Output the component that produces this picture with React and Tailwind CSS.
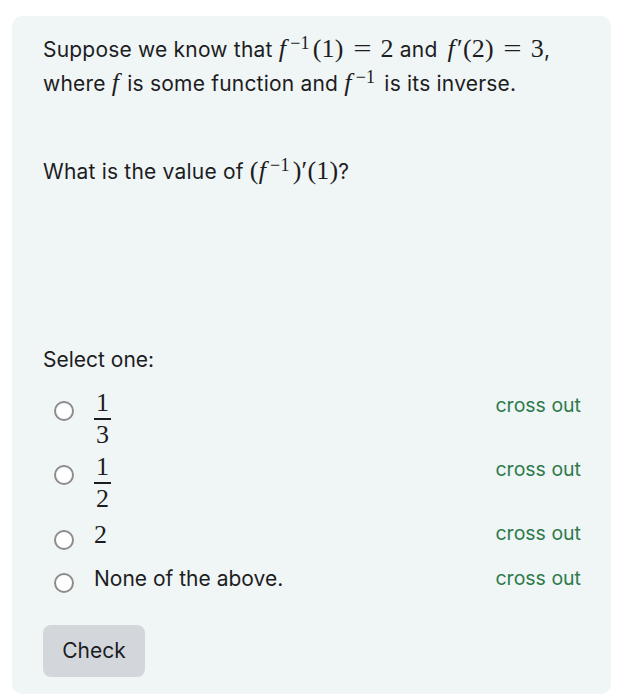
import React from "react";

const M = ({ children }) => (
  <span className="font-['Liberation_Serif','DejaVu_Serif',serif] text-[26px] leading-[0]">{children}</span>
);
const F = () => <span className="italic pr-[2px]">f</span>;
const Inv = () => (
  <sup className="text-[18px] relative -top-[8px] ml-[2px] mr-[3px]">−1</sup>
);
const Eq = () => <span className="inline-block scale-x-125 mx-[11px]">=</span>;

const Frac = ({ top, bottom }) => (
  <span className="inline-flex flex-col items-center font-['Liberation_Serif','DejaVu_Serif',serif] text-[26px] leading-[30px]">
    <span>{top}</span>
    <span className="w-[17px] h-[2px] bg-[#1d1d1f]"></span>
    <span>{bottom}</span>
  </span>
);

const Radio = ({ mt }) => (
  <span className={`block w-[20px] h-[20px] rounded-full border-2 border-[#8c8c8c] bg-white ml-[11px] shrink-0 ${mt}`}></span>
);

const options = [
  { key: "a", h: "h-[64px]", radio: "mt-[13px]", cross: "mt-[5px]", body: <Frac top="1" bottom="3" />, bodyMt: "mt-0" },
  { key: "b", h: "h-[64px]", radio: "mt-[13px]", cross: "mt-[5px]", body: <Frac top="1" bottom="2" />, bodyMt: "mt-0" },
  { key: "c", h: "h-[48px]", radio: "mt-[14px]", cross: "mt-[5px]", body: <span className="font-['Liberation_Serif','DejaVu_Serif',serif] text-[26px] leading-[30px]">2</span>, bodyMt: "mt-[4px]" },
  { key: "d", h: "h-[30px]", radio: "mt-[9px]", cross: "mt-[2px]", body: <span className="text-[21px] leading-[30px]">None of the above.</span>, bodyMt: "mt-0" },
];

export default function App() {
  return (
    <div className="min-h-[700px] bg-white pt-[16px] pl-[12px] font-['Inter','Noto_Sans',sans-serif] text-[#1d1d1f]">
      <div className="w-[599px] h-[678px] bg-[#f0f5f6] rounded-[10px] pt-[17px] pl-[31px] pr-[30px]">
        <p className="text-[21px] leading-[34px] tracking-[0.2px]">
          Suppose we know that <M><F /><Inv />(1)<Eq />2</M> and{" "}
          <M><span className="ml-[4px]"></span><F />′(2)<Eq />3</M>,
          <br />
          where <M><F /></M> is some function and <M><F /><Inv /></M> is its inverse.
        </p>

        <p className="text-[21px] leading-[34px] tracking-[0.2px] mt-[54px]">
          What is the value of <M>(<F /><Inv />)′(1)</M>?
        </p>

        <p className="text-[21px] leading-[34px] mt-[154px]">Select one:</p>

        <div className="mt-[11px]">
          {options.map((o) => (
            <div key={o.key} className={`flex items-start ${o.h}`}>
              <Radio mt={o.radio} />
              <div className={`ml-[20px] ${o.bodyMt}`}>{o.body}</div>
              <span className={`ml-auto text-[19.5px] leading-[24px] text-[#2e7a4b] ${o.cross}`}>cross out</span>
            </div>
          ))}
        </div>

        <button className="mt-[31px] w-[102px] h-[52px] rounded-[8px] bg-[#d3d7dc] text-[21px] text-[#1d1d1f]">
          Check
        </button>
      </div>
    </div>
  );
}
